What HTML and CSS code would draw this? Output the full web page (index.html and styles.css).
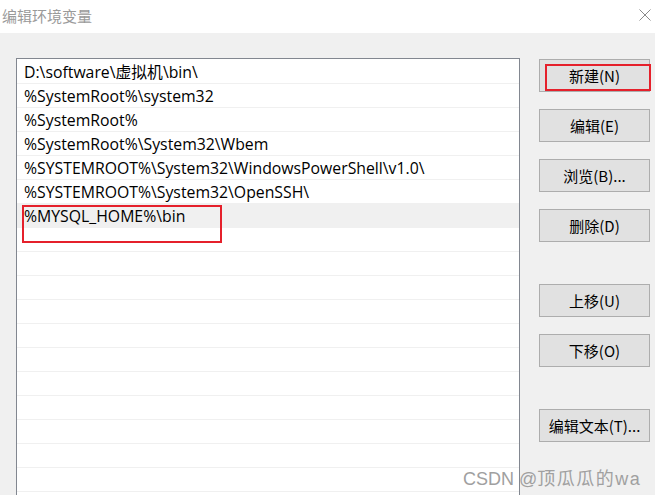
FILE: index.html
```html
<!DOCTYPE html>
<html lang="zh-CN">
<head>
  <meta charset="UTF-8">
  <title>编辑环境变量</title>
  <link rel="stylesheet" href="styles.css">
</head>
<body>

  <!-- Title bar -->
  <header class="title-bar">
    <span class="title">编辑环境变量</span>
    <svg class="close" viewBox="0 0 12 12" width="12" height="12">
      <path d="M0.5,0.5 L11.5,11.5 M11.5,0.5 L0.5,11.5" stroke="#8a8a8a" stroke-width="1" fill="none"></path>
    </svg>
  </header>

  <div class="dialog">
    <!-- Path list -->
    <div class="path-list">
      <div class="row">D:\software\虚拟机\bin\</div>
      <div class="row">%SystemRoot%\system32</div>
      <div class="row">%SystemRoot%</div>
      <div class="row">%SystemRoot%\System32\Wbem</div>
      <div class="row">%SYSTEMROOT%\System32\WindowsPowerShell\v1.0\</div>
      <div class="row">%SYSTEMROOT%\System32\OpenSSH\</div>
      <div class="row selected">%MYSQL_HOME%\bin</div>
      <div class="row"></div>
      <div class="row"></div>
      <div class="row"></div>
      <div class="row"></div>
      <div class="row"></div>
      <div class="row"></div>
      <div class="row"></div>
      <div class="row"></div>
      <div class="row"></div>
      <div class="row"></div>
      <div class="row"></div>
      <div class="row"></div>
      <div class="mark mark-row"></div>
    </div>

    <!-- Buttons -->
    <div class="buttons">
      <button class="btn">新建(N)<span class="mark mark-btn"></span></button>
      <button class="btn">编辑(E)</button>
      <button class="btn">浏览(B)...</button>
      <button class="btn">删除(D)</button>
      <button class="btn group">上移(U)</button>
      <button class="btn">下移(O)</button>
      <button class="btn group">编辑文本(T)...</button>
    </div>
  </div>

  <div class="watermark">CSDN @<span class="wm-name">顶瓜瓜的wa</span></div>

</body>
</html>
```

FILE: styles.css
```css
body {
  margin: 0;
  padding: 0;
  width: 655px;
  height: 495px;
  overflow: hidden;
  background-color: #f0f0f0;
  font-family: "Open Sans", "Noto Sans CJK SC", sans-serif;
  position: relative;
}

.title-bar {
  height: 33px;
  background: #ffffff;
  display: flex;
  align-items: center;
  justify-content: space-between;
  padding: 0 4px 0 2px;
}

.title {
  font-family: "Noto Sans CJK SC", sans-serif;
  font-size: 15px;
  color: #9a9a9a;
  margin-top: -2px;
}

.close {
  margin-top: -4px;
}

.dialog {
  display: flex;
  align-items: flex-start;
  padding: 25px 0 0 16px;
  gap: 19px;
}

.path-list {
  position: relative;
  width: 502px;
  height: 460px;
  background: #ffffff;
  border: 1px solid #828790;
  border-bottom: none;
  overflow: hidden;
}

.row {
  height: 23px;
  border-bottom: 1px solid #f0f0f0;
  padding-left: 7px;
  font-size: 15.8px;
  line-height: 25px;
  color: #000000;
  white-space: nowrap;
}

.row:first-child {
  margin-top: 1px;
}

.row.selected {
  background: #f0f0f0;
}

.buttons {
  display: flex;
  flex-direction: column;
  gap: 17px;
  padding-top: 1px;
}

.btn {
  width: 111px;
  height: 33px;
  background: #e1e1e1;
  border: 1px solid #adadad;
  font-family: "Noto Sans CJK SC", sans-serif;
  font-size: 15px;
  color: #000000;
  padding: 0;
  position: relative;
}

.btn.group {
  margin-top: 25px;
}

/* red annotation boxes */
.mark {
  position: absolute;
  border: 2px solid #e5202b;
}

.mark-row {
  left: 5px;
  top: 146px;
  width: 196px;
  height: 34px;
}

.mark-btn {
  left: 5px;
  top: 4px;
  width: 102px;
  height: 23px;
}

.watermark {
  position: absolute;
  left: 463px;
  top: 464px;
  font-family: "Liberation Sans", "Noto Sans CJK SC", sans-serif;
  font-size: 18px;
  color: #a0a0a0;
}

.wm-name {
  letter-spacing: 1.5px;
}
```
